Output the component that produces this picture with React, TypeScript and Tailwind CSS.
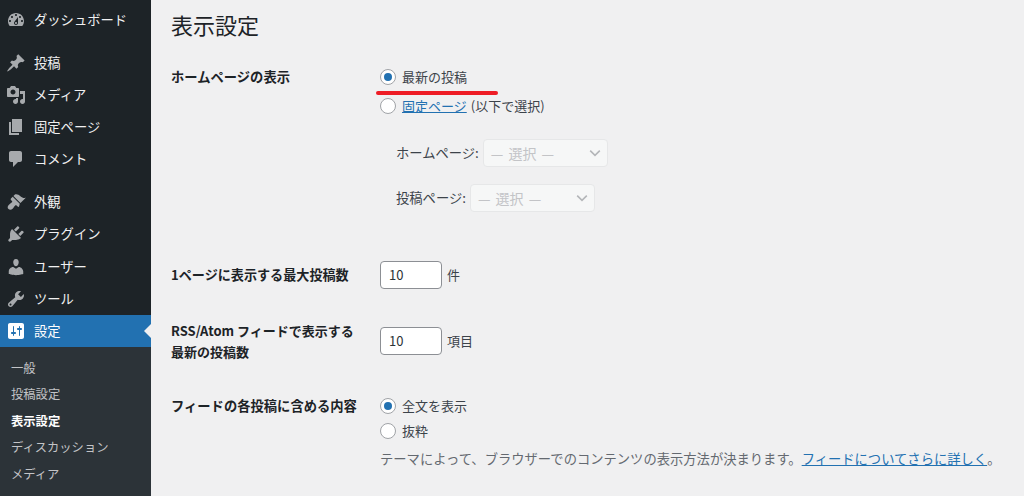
const ICONS = {
  dashboard:
    "M3.76 16h12.48c1.1-1.37 1.76-3.11 1.76-5 0-4.42-3.58-8-8-8s-8 3.58-8 8c0 1.89.66 3.63 1.76 5zM10 4c.55 0 1 .45 1 1s-.45 1-1 1-1-.45-1-1 .45-1 1-1zM6 6c.55 0 1 .45 1 1s-.45 1-1 1-1-.45-1-1 .45-1 1-1zm8 0c.55 0 1 .45 1 1s-.45 1-1 1-1-.45-1-1 .45-1 1-1zm-5.37 5.55L12 7v6c0 1.1-.9 2-2 2s-2-.9-2-2c0-.57.24-1.08.63-1.45zM4 10c.55 0 1 .45 1 1s-.45 1-1 1-1-.45-1-1 .45-1 1-1zm12 0c.55 0 1 .45 1 1s-.45 1-1 1-1-.45-1-1 .45-1 1-1zm-5 3c0-.55-.45-1-1-1s-1 .45-1 1 .45 1 1 1 1-.45 1-1z",
  pin: "M10.44 3.02l1.82-1.82 6.36 6.35-1.83 1.82c-1.05-.68-2.48-.57-3.41.36l-.75.75c-.92.93-1.04 2.35-.35 3.41l-1.83 1.82-2.41-2.41-2.8 2.79c-.42.42-3.38 2.71-3.8 2.29s1.86-3.39 2.28-3.81l2.79-2.79L4.1 9.36l1.83-1.82c1.05.69 2.48.57 3.4-.36l.75-.75c.93-.92 1.05-2.35.36-3.41z",
  media:
    "M13 11V4c0-.55-.45-1-1-1h-1.67L9 1H5L3.67 3H2c-.55 0-1 .45-1 1v7c0 .55.45 1 1 1h10c.55 0 1-.45 1-1zM7 4.5c1.38 0 2.5 1.12 2.5 2.5S8.38 9.5 7 9.5 4.5 8.38 4.5 7 5.62 4.5 7 4.5zM14 6h5v10.5c0 1.38-1.12 2.5-2.5 2.5S14 17.88 14 16.5s1.12-2.5 2.5-2.5c.17 0 .34.02.5.05V9h-3V6zm-4 8.05V13h2v3.5c0 1.38-1.12 2.5-2.5 2.5S7 17.88 7 16.5 8.12 14 9.5 14c.17 0 .34.02.5.05z",
  page: "M6 15V2h10v13H6zm-1 1h8v2H3V5h2v11z",
  comment:
    "M5 2h9c1.1 0 2 .9 2 2v7c0 1.1-.9 2-2 2h-2l-5 5v-5H5c-1.1 0-2-.9-2-2V4c0-1.1.9-2 2-2z",
  brush:
    "M14.48 11.06L7.41 3.99l1.5-1.5c.5-.56 2.3-.47 3.51.32 1.21.8 1.43 1.28 2.91 2.1 1.18.64 2.45 1.26 4.45.85zm-.71.71L6.7 4.7 4.93 6.47c-.39.39-.39 1.02 0 1.41l1.06 1.06c.39.39.39 1.03 0 1.42-.6.6-1.43 1.11-2.21 1.69-.35.26-.7.53-1.01.84-1.43 1.43-1.4 3.04-.29 4.15 1.1 1.1 2.72 1.14 4.15-.29.31-.31.58-.66.84-1.01.58-.78 1.09-1.61 1.69-2.21.39-.39 1.03-.39 1.42 0l1.06 1.06c.39.39 1.02.39 1.41 0z",
  plugin:
    "M13.11 4.36L9.87 7.6 8 5.73l3.24-3.24c.35-.34 1.05-.2 1.56.32.52.51.66 1.21.31 1.55zm-8 1.77l.91-1.12 9.01 9.01-1.19.84c-.71.71-2.63 1.16-3.82 1.16H6.14L4.9 17.26c-.59.59-1.54.59-2.12 0-.59-.58-.59-1.53 0-2.12l1.24-1.24v-3.88c0-1.13.4-3.19 1.09-3.89zm7.26 3.97l3.24-3.24c.34-.35 1.04-.21 1.55.31.52.51.66 1.21.31 1.55l-3.24 3.25z",
  user: "M10 9.25c-2.27 0-2.73-3.44-2.73-3.44C7 4.02 7.82 2 9.97 2c2.16 0 2.98 2.02 2.71 3.81 0 0-.41 3.44-2.68 3.44zm0 2.57L12.72 10c2.39 0 4.52 2.33 4.52 4.53v2.49s-3.65 1.13-7.24 1.13c-3.65 0-7.24-1.13-7.24-1.13v-2.49c0-2.25 1.94-4.48 4.47-4.48z",
  wrench:
    "M16.68 9.77c-1.34 1.34-3.3 1.67-4.95.99l-5.41 6.52c-.99.99-2.59.99-3.58 0s-.99-2.59 0-3.57l6.52-5.42c-.68-1.65-.35-3.61.99-4.95 1.28-1.28 3.12-1.62 4.72-1.06l-2.89 2.89 2.82 2.82 2.86-2.87c.53 1.58.18 3.39-1.08 4.65zM3.81 16.21c.4.39 1.04.39 1.43 0 .4-.4.4-1.04 0-1.43-.39-.4-1.03-.4-1.43 0-.39.39-.39 1.03 0 1.43z",
  settings:
    "M18 16V4c0-1.1-.9-2-2-2H4c-1.1 0-2 .9-2 2v12c0 1.1.9 2 2 2h12c1.1 0 2-.9 2-2zM8 11h1c.55 0 1 .45 1 1s-.45 1-1 1H8v1.5c0 .28-.22.5-.5.5s-.5-.22-.5-.5V13H6c-.55 0-1-.45-1-1s.45-1 1-1h1V5.5c0-.28.22-.5.5-.5s.5.22.5.5V11zm5-2h-1c-.55 0-1-.45-1-1s.45-1 1-1h1V5.5c0-.28.22-.5.5-.5s.5.22.5.5V7h1c.55 0 1 .45 1 1s-.45 1-1 1h-1v5.5c0 .28-.22.5-.5.5s-.5-.22-.5-.5V9z",
};

function MenuItem({
  icon,
  label,
  active = false,
  compact = false,
}: {
  icon: string;
  label: string;
  active?: boolean;
  compact?: boolean;
}) {
  return (
    <div
      className={`relative flex items-center text-[13.3px] ${compact ? "h-[32px]" : "h-[32.3px]"} ${
        active ? "bg-[#2271b1] text-white" : "text-[#f0f0f1]"
      }`}
    >
      <svg
        className={`ml-[6px] mr-[8px] h-[20px] w-[20px] ${active ? "text-white" : "text-[#a7aaad]"}`}
        viewBox="0 0 20 20"
        fill="currentColor"
        aria-hidden
      >
        <path d={icon} />
      </svg>
      <span>{label}</span>
      {active ? (
        <span className="absolute right-0 top-1/2 h-0 w-0 -translate-y-1/2 border-y-[7px] border-r-[7px] border-y-transparent border-r-[#f0f0f1]" />
      ) : null}
    </div>
  );
}

function Radio({ checked = false }: { checked?: boolean }) {
  return (
    <span className="mr-[6px] flex h-[16px] w-[16px] shrink-0 items-center justify-center rounded-full border border-[#a0a3a7] bg-white">
      {checked ? <span className="h-[8px] w-[8px] rounded-full bg-[#2271b1]" /> : null}
    </span>
  );
}

function DisabledSelect() {
  return (
    <div className="flex h-[28px] w-[125px] items-center justify-between rounded-[4px] border border-[#e6e7e8] bg-[#f6f7f7] pl-[7px] pr-[6px] text-[14px] text-[#c3c4c7] [word-spacing:2px]">
      <span>— 選択 —</span>
      <svg className="h-[12px] w-[12px] text-[#b4b6b9]" viewBox="0 0 12 12" fill="none" stroke="currentColor" strokeWidth="1.6" aria-hidden>
        <path d="M1.2 3.6L6 8.4l4.8-4.8" />
      </svg>
    </div>
  );
}

function NumberBox({ value }: { value: string }) {
  return (
    <span className="flex h-[28px] w-[62px] items-center rounded-[4px] border border-[#8c8f94] bg-white px-[8px] text-[13px] text-[#2c3338]">
      {value}
    </span>
  );
}

export default function App() {
  return (
    <div
      className="relative flex h-[496px] w-[1024px] overflow-hidden bg-[#f0f0f1] text-[13px] text-[#3c434a]"
      style={{ fontFamily: '"Noto Sans CJK JP", "Noto Sans", sans-serif' }}
    >
      <aside className="flex w-[151px] shrink-0 flex-col bg-[#1d2327]">
        <div className="pt-[4px]">
          <MenuItem compact icon={ICONS.dashboard} label="ダッシュボード" />
        </div>
        <div className="mt-[11px]">
          <MenuItem compact icon={ICONS.pin} label="投稿" />
          <MenuItem compact icon={ICONS.media} label="メディア" />
          <MenuItem compact icon={ICONS.page} label="固定ページ" />
          <MenuItem compact icon={ICONS.comment} label="コメント" />
        </div>
        <div className="mt-[11px]">
          <MenuItem icon={ICONS.brush} label="外観" />
          <MenuItem icon={ICONS.plugin} label="プラグイン" />
          <MenuItem icon={ICONS.user} label="ユーザー" />
          <MenuItem icon={ICONS.wrench} label="ツール" />
          <MenuItem icon={ICONS.settings} label="設定" active />
        </div>
        <div className="flex-1 bg-[#2c3338] pl-[11px] pt-[7px] text-[12.3px] text-[#c3c4c7]">
          <div className="flex h-[26.5px] items-center">一般</div>
          <div className="flex h-[26.5px] items-center">投稿設定</div>
          <div className="flex h-[26.5px] items-center font-bold text-white">表示設定</div>
          <div className="flex h-[26.5px] items-center">ディスカッション</div>
          <div className="flex h-[26.5px] items-center">メディア</div>
        </div>
      </aside>

      <main className="min-w-0 flex-1 pl-[20px]">
        <h1 className="pt-[8px] text-[22px] leading-[32px] text-[#1d2327]">表示設定</h1>

        <section className="mt-[25px] flex">
          <h2 className="w-[209px] shrink-0 pt-[2px] text-[13.3px] font-bold leading-[20px] text-[#1d2327]">
            ホームページの表示
          </h2>
          <div>
            <div className="flex h-[24px] items-center">
              <Radio checked />
              <span>最新の投稿</span>
            </div>
            <div className="mt-[5px] flex h-[24px] items-center">
              <Radio />
              <a className="text-[#2271b1] underline">固定ページ</a>
              <span className="ml-[4px]">(以下で選択)</span>
            </div>
            <div className="ml-[16px] mt-[21px] flex items-center gap-[4px] text-[13.3px]">
              <span>ホームページ:</span>
              <DisabledSelect />
            </div>
            <div className="ml-[16px] mt-[17px] flex items-center gap-[4px] text-[13.3px]">
              <span>投稿ページ:</span>
              <DisabledSelect />
            </div>
          </div>
        </section>

        <section className="mt-[49px] flex items-center">
          <h2 className="w-[209px] shrink-0 text-[13.1px] font-bold text-[#1d2327]">1ページに表示する最大投稿数</h2>
          <NumberBox value="10" />
          <span className="ml-[5px]">件</span>
        </section>

        <section className="mt-[31px] flex items-center">
          <h2 className="w-[209px] shrink-0 text-[13px] font-bold leading-[21px] text-[#1d2327]">
            RSS/Atom フィードで表示する
            <br />
            最新の投稿数
          </h2>
          <NumberBox value="10" />
          <span className="ml-[5px]">項目</span>
        </section>

        <section className="mt-[32px] flex">
          <h2 className="w-[209px] shrink-0 pt-[2px] text-[13.3px] font-bold leading-[20px] text-[#1d2327]">
            フィードの各投稿に含める内容
          </h2>
          <div>
            <div className="flex h-[24px] items-center">
              <Radio checked />
              <span>全文を表示</span>
            </div>
            <div className="mt-[1px] flex h-[24px] items-center">
              <Radio />
              <span>抜粋</span>
            </div>
            <p className="mt-[6px] whitespace-nowrap text-[13.3px] text-[#646970]">
              テーマによって、ブラウザーでのコンテンツの表示方法が決まります。
              <a className="text-[#2271b1] underline">フィードについてさらに詳しく</a>。
            </p>
          </div>
        </section>
      </main>

      <span className="pointer-events-none absolute left-[376px] top-[91px] h-[4px] w-[122px] rounded-full bg-[#ee1c25]" />
    </div>
  );
}
